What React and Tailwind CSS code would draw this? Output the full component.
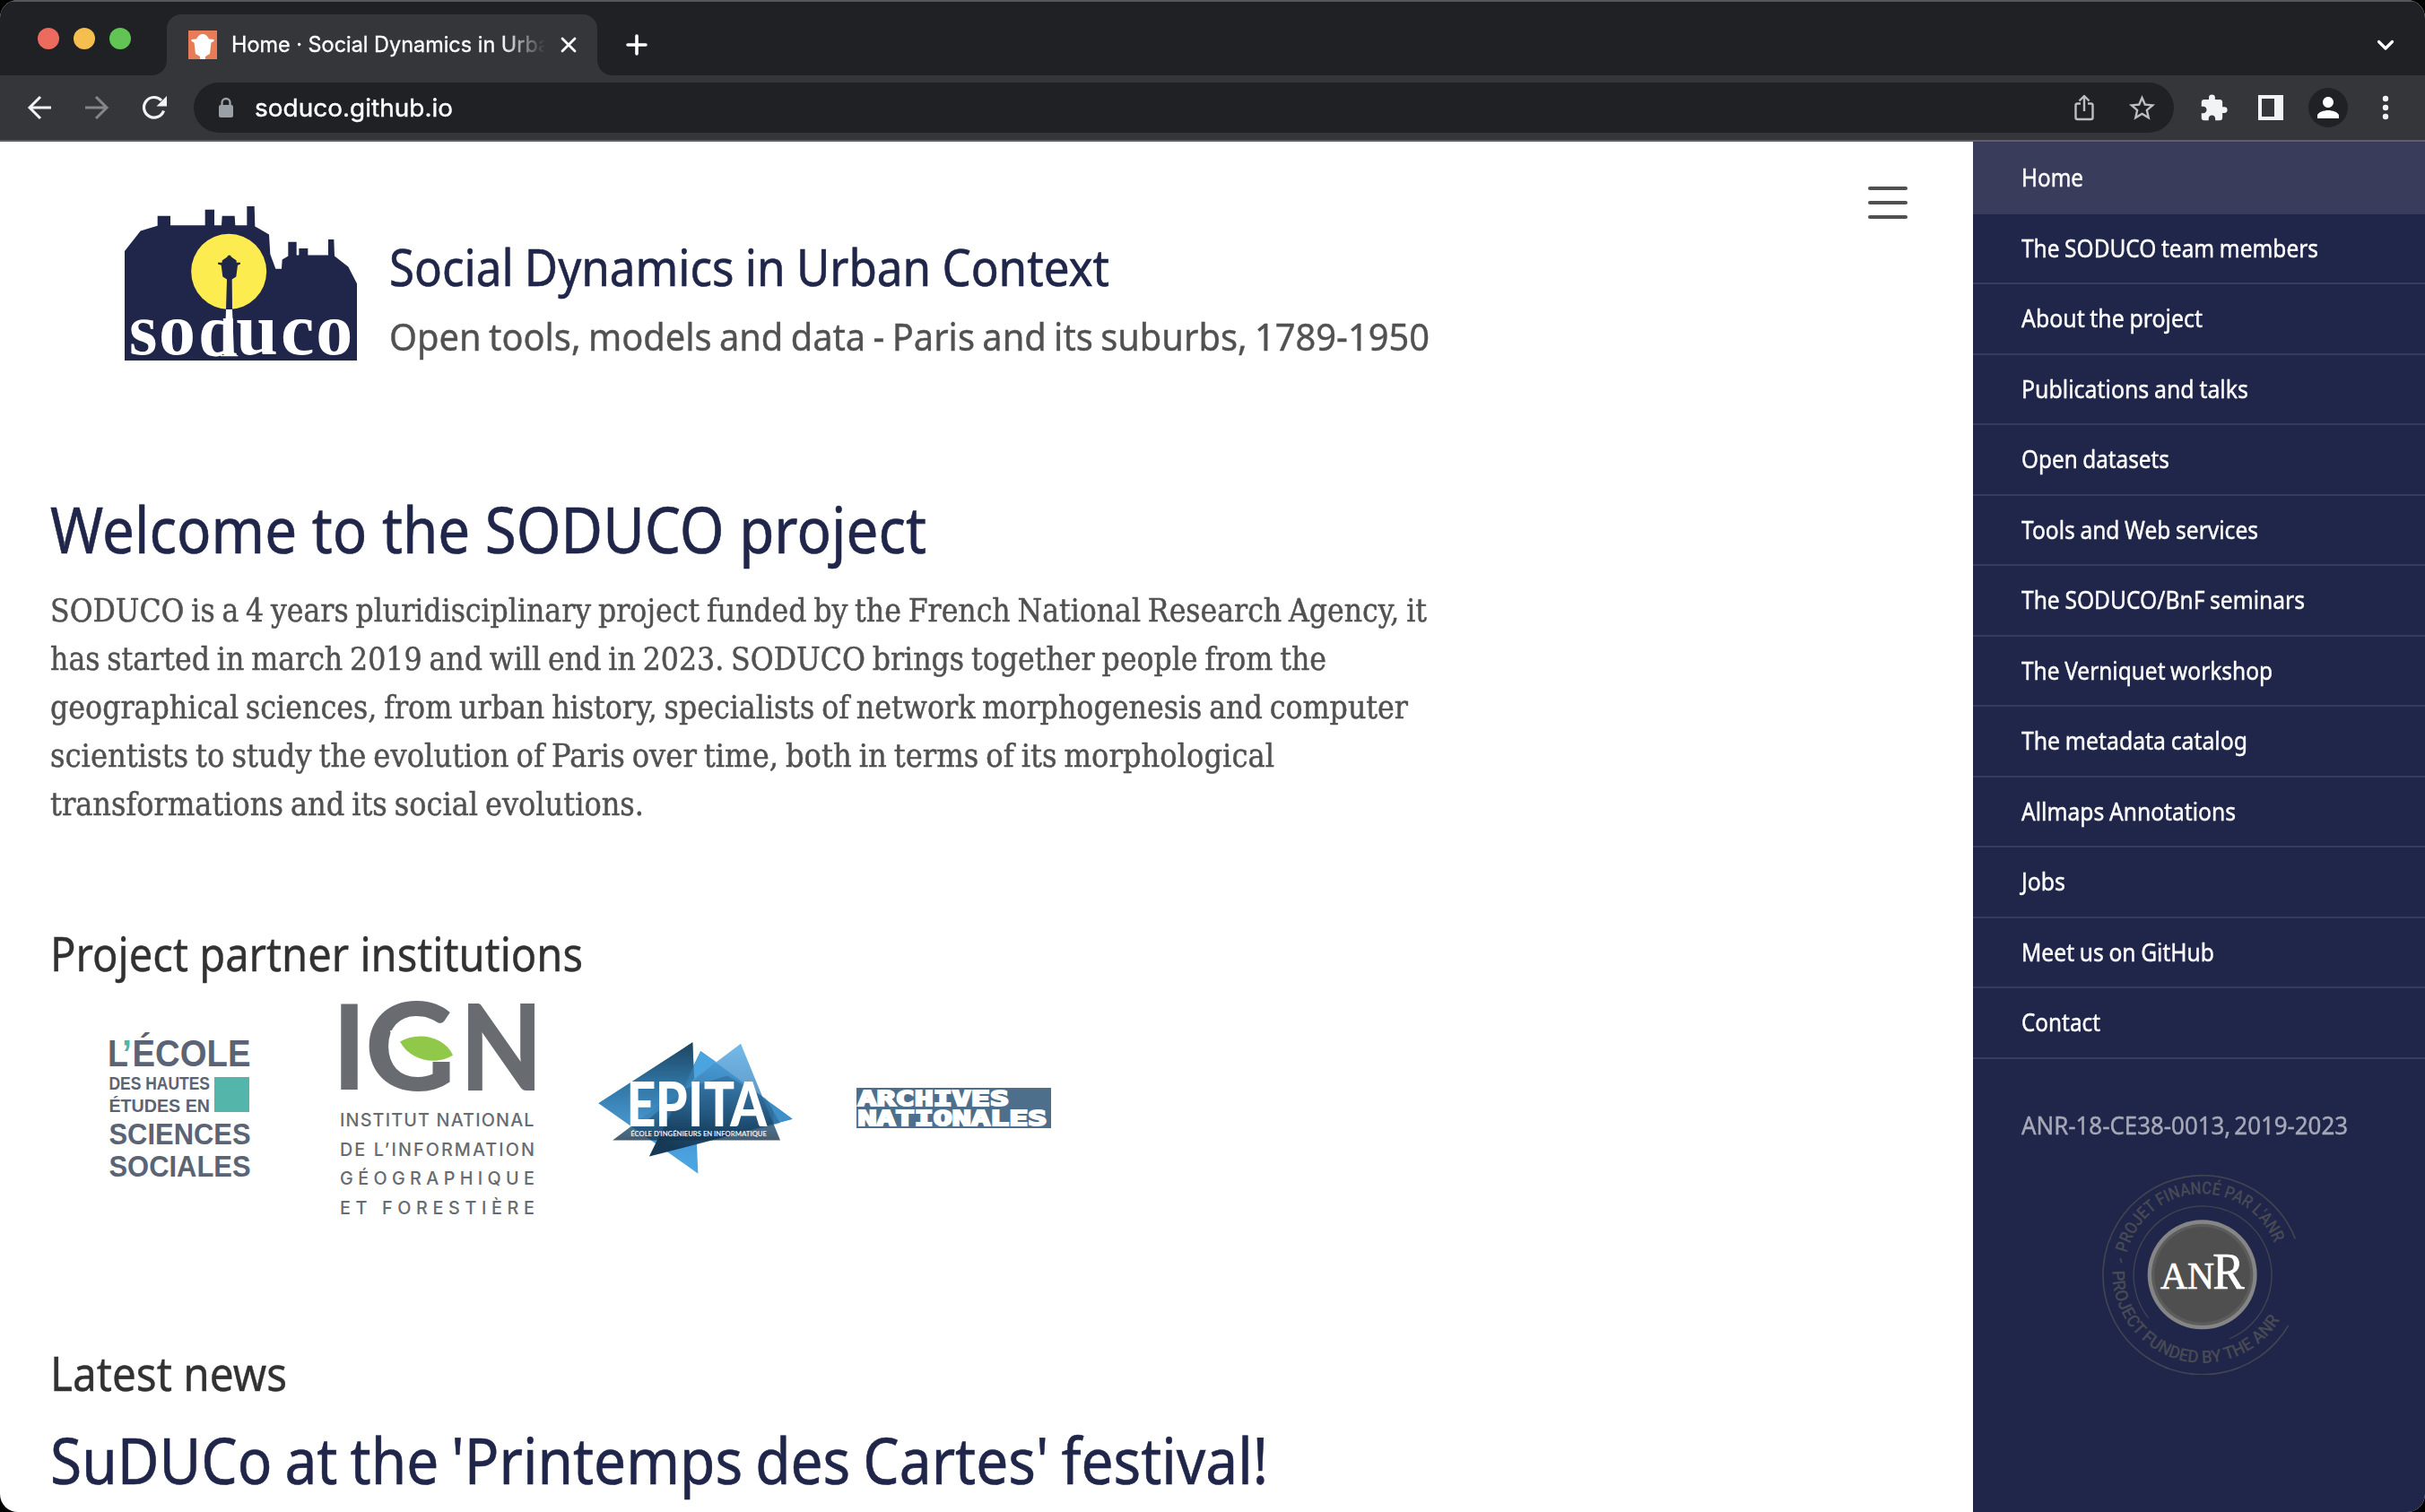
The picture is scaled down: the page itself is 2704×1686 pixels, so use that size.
import React, { useLayoutEffect, useRef } from "react";
import { MdExtension, MdPerson, MdStarBorder } from "react-icons/md";

/* A single line of text condensed or widened to an exact advance width. */
function Fit({ w, className = "", children }) {
  const ref = useRef(null);
  useLayoutEffect(() => {
    const el = ref.current;
    el.style.transform = "none";
    const natural = el.getBoundingClientRect().width;
    el.style.transform = `scaleX(${w / natural})`;
  }, [w]);
  return (
    <div className={`whitespace-nowrap ${className}`} style={{ width: w }}>
      <span ref={ref} className="inline-block origin-left">
        {children}
      </span>
    </div>
  );
}

const nav = [
  ["Home", 69],
  ["The SODUCO team members", 331],
  ["About the project", 202],
  ["Publications and talks", 253],
  ["Open datasets", 165],
  ["Tools and Web services", 264],
  ["The SODUCO/BnF seminars", 316],
  ["The Verniquet workshop", 280],
  ["The metadata catalog", 252],
  ["Allmaps Annotations", 239],
  ["Jobs", 49],
  ["Meet us on GitHub", 215],
  ["Contact", 88],
];

const intro = [
  ["SODUCO is a 4 years pluridisciplinary project funded by the French National Research Agency, it", 1535],
  ["has started in march 2019 and will end in 2023. SODUCO brings together people from the", 1423],
  ["geographical sciences, from urban history, specialists of network morphogenesis and computer", 1514],
  ["scientists to study the evolution of Paris over time, both in terms of its morphological", 1365],
  ["transformations and its social evolutions.", 662],
];

function TabStrip() {
  return (
    <div className="flex h-[84px] border-t-2 border-[#56575a] bg-[#202124] pt-[14px]">
      <div className="flex w-[186px] gap-4 pl-[42px] pt-[15px]">
        <span className="size-6 rounded-full bg-[#ed6a5f]" />
        <span className="size-6 rounded-full bg-[#f5bf4f]" />
        <span className="size-6 rounded-full bg-[#61c454]" />
      </div>
      <div className="relative flex w-[480px] items-center rounded-t-[16px] bg-[#35363a] pl-6">
        <span className="absolute -left-4 bottom-0 size-4 bg-[radial-gradient(circle_at_0_0,transparent_15.5px,#35363a_16px)]" />
        <span className="absolute -right-4 bottom-0 size-4 bg-[radial-gradient(circle_at_100%_0,transparent_15.5px,#35363a_16px)]" />
        <svg width="32" height="32" viewBox="0 0 32 32">
          <rect width="32" height="32" fill="#e87c57" />
          <path d="M9 9.500C10.500 6 13 4 16 4s5.500 2 7 5.500l5.500.5v2l-3 1.500L24 26l-5 3v3h-6v-3l-5-3-1.500-12.500-3-1.500v-2z" fill="#fff" />
        </svg>
        <div className="ml-4 w-[350px] overflow-hidden font-['Inter'] text-[24px] leading-[32px] text-white [-webkit-text-stroke:0.3px] [mask-image:linear-gradient(to_right,black_300px,transparent_350px)]">
          <Fit w={369}>Home · Social Dynamics in Urban</Fit>
        </div>
        <svg className="ml-[10px]" width="32" height="32" viewBox="0 0 32 32" stroke="#fff" strokeWidth="2.8" strokeLinecap="round">
          <path d="M9 9l14 14M23 9L9 23" />
        </svg>
      </div>
      <svg className="ml-[28px] mt-[18px]" width="32" height="32" viewBox="0 0 32 32" stroke="#fff" strokeWidth="3.6" strokeLinecap="round">
        <path d="M16 6v20M6 16h20" />
      </svg>
      <svg className="ml-auto mr-[28px] mt-[18px]" width="32" height="32" viewBox="0 0 32 32" fill="none" stroke="#fff" strokeWidth="3.2" strokeLinecap="round" strokeLinejoin="round">
        <path d="M8.500 12.500L16 20l7.500-7.500" />
      </svg>
    </div>
  );
}

function Toolbar() {
  return (
    <div className="flex h-[74px] items-center border-b-2 border-[#5f6062] bg-[#35363a]">
      <div className="flex w-[216px] items-center gap-8 pl-7">
        <svg width="32" height="32" viewBox="0 0 32 32" fill="none" stroke="#f1f3f4" strokeWidth="3">
          <path d="M29 16H5M17 4L5 16l12 12" />
        </svg>
        <svg width="32" height="32" viewBox="0 0 32 32" fill="none" stroke="#85868a" strokeWidth="3">
          <path d="M3 16h24M15 4l12 12-12 12" />
        </svg>
        <svg width="32" height="32" viewBox="0 0 32 32">
          <path d="M26.500 19.500A11.300 11.300 0 1 1 24 8" fill="none" stroke="#f1f3f4" strokeWidth="3.200" />
          <path d="M30 3v11.500H18.500z" fill="#f1f3f4" />
        </svg>
      </div>
      <div className="flex h-14 w-[2208px] items-center rounded-full bg-[#202124] pl-[26px] pr-[18px]">
        <svg width="20" height="24" viewBox="0 0 20 24">
          <path d="M5.500 10V6.500a4.500 4.500 0 019 0V10" fill="none" stroke="#9aa0a6" strokeWidth="2.400" />
          <rect x="2" y="9" width="16" height="14" rx="2" fill="#9aa0a6" />
        </svg>
        <Fit w={221} className="ml-[22px] font-['Inter'] text-[27.5px] leading-[36px] text-white [-webkit-text-stroke:0.4px]">
          soduco.github.io
        </Fit>
        <svg className="ml-auto" width="32" height="32" viewBox="0 0 32 32" fill="none" stroke="#bdbec0" strokeWidth="2.400" strokeLinejoin="round">
          <path d="M12 11.500H8.500a2 2 0 00-2 2V27a2 2 0 002 2h15a2 2 0 002-2V13.500a2 2 0 00-2-2H20M16 20V3.500M10.500 8.500L16 3l5.500 5.500" />
        </svg>
        <MdStarBorder size={35} color="#bdbec0" className="ml-[31px]" />
      </div>
      <MdExtension size={33} color="#f1f3f4" className="ml-[28px]" />
      <svg className="ml-[33px]" width="28" height="28" viewBox="0 0 28 28">
        <path d="M0 0h28v28H0zM4 4v20h14V4z" fill="#f1f3f4" fillRule="evenodd" />
      </svg>
      <div className="ml-[28px] flex size-11 items-center justify-center rounded-full bg-[#202124]">
        <MdPerson size={36} color="#fff" />
      </div>
      <svg className="ml-[34px]" width="16" height="32" viewBox="0 0 16 32" fill="#f1f3f4">
        <circle cx="8" cy="6" r="3.200" />
        <circle cx="8" cy="16" r="3.200" />
        <circle cx="8" cy="26" r="3.200" />
      </svg>
    </div>
  );
}

function SoducoLogo() {
  return (
    <svg width="259" height="172" viewBox="57 60 777 515" preserveAspectRatio="none">
      <path
        fill="#20264a"
        d="M57 210L110 142L167 125V92H210V124H326V71H357V124H381L383 92H425L427 124H466V60H491L493 127L540 154L544 220L562 269H582L584 238L604 226V179H632V223H640V201H670V223H738V171H757L759 226L805 262L834 318V575H57Z"
      />
      <g fill="#fff" fontFamily="'Liberation Serif', serif" fontWeight="700" fontSize="244">
        <text x="72" y="555" textLength="94" lengthAdjust="spacingAndGlyphs">s</text>
        <text x="171" y="555" textLength="123" lengthAdjust="spacingAndGlyphs">o</text>
        <text x="430" y="555" textLength="140" lengthAdjust="spacingAndGlyphs">u</text>
        <text x="579" y="555" textLength="112" lengthAdjust="spacingAndGlyphs">c</text>
        <text x="697" y="555" textLength="123" lengthAdjust="spacingAndGlyphs">o</text>
        <text x="304" y="557" textLength="130" lengthAdjust="spacingAndGlyphs">d</text>
      </g>
      <path d="M330 370H430V434H330Z" fill="#20264a" />
      <circle cx="405.500" cy="278" r="126" fill="#fdec4f" />
      <path
        fill="#20264a"
        d="M399 230Q407 217 415 230L431 241V248H444V253L435 257L430 295L416 304L417 404H396L399 304L385 295L380 257L369 253V248H383V241Z"
      />
      <path d="M396 404H417L423 557H436V561H378V557H391Z" fill="#fff" />
    </svg>
  );
}

function EhessLogo() {
  return (
    <svg className="mt-[40px]" width="158" height="166" viewBox="31 50 158 166" fill="#5b6474" fontFamily="'Liberation Sans', sans-serif" fontWeight="700">
      <text x="30" y="89.700" fontSize="43" textLength="23" lengthAdjust="spacingAndGlyphs">L</text>
      <text x="46" y="89.700" fontSize="43" textLength="11" lengthAdjust="spacingAndGlyphs" fill="#4fb5ab">’</text>
      <text x="57.500" y="89.700" fontSize="43" textLength="132" lengthAdjust="spacingAndGlyphs">ÉCOLE</text>
      <text x="31.500" y="116" fontSize="19.500" textLength="112.500" lengthAdjust="spacingAndGlyphs">DES HAUTES</text>
      <text x="31.500" y="141" fontSize="20" textLength="112.500" lengthAdjust="spacingAndGlyphs">ÉTUDES EN</text>
      <rect x="149" y="102" width="39" height="39" fill="#54b5ab" />
      <text x="31.500" y="176.500" fontSize="34" textLength="158" lengthAdjust="spacingAndGlyphs">SCIENCES</text>
      <text x="31.500" y="213" fontSize="34" textLength="158" lengthAdjust="spacingAndGlyphs">SOCIALES</text>
    </svg>
  );
}

function IgnLogo() {
  return (
    <svg className="ml-[99px] mt-[6px]" width="220" height="248" viewBox="288 16 220 248" fill="#686b70">
      <g fontFamily="Lato, sans-serif" fontWeight="900">
        <text x="281" y="116" fontSize="132" textLength="37" lengthAdjust="spacingAndGlyphs">I</text>
        <text x="317" y="116.500" fontSize="135" textLength="101" lengthAdjust="spacingAndGlyphs">G</text>
        <text x="423" y="116.500" fontSize="134" textLength="92" lengthAdjust="spacingAndGlyphs">N</text>
      </g>
      <path d="M345 50H414V82L412 85H381V84H352Z" fill="#fff" />
      <path d="M356 62.500C375 51 405 56 415 77.500C398 89 368 85 356 62.500Z" fill="#90c94a" />
      <g fontFamily="Inter, sans-serif" fontWeight="500" fontSize="19.800">
        <text x="289" y="156.700" textLength="216.500" lengthAdjust="spacing">INSTITUT NATIONAL</text>
        <text x="289" y="189.700" textLength="217" lengthAdjust="spacing">DE L’INFORMATION</text>
        <text x="289" y="222.300" textLength="217" lengthAdjust="spacing">GÉOGRAPHIQUE</text>
        <text x="289" y="255" textLength="217" lengthAdjust="spacing">ET FORESTIÈRE</text>
      </g>
    </svg>
  );
}

function EpitaLogo() {
  return (
    <svg className="ml-[69px] mt-[53px]" width="217" height="147" viewBox="78 68 606 440" preserveAspectRatio="none">
      <defs>
        <linearGradient id="left" gradientUnits="userSpaceOnUse" x1="0" y1="69" x2="0" y2="507">
          <stop offset="0" stopColor="#1d4461" />
          <stop offset="0.300" stopColor="#2f72a0" />
          <stop offset="0.550" stopColor="#428fc6" />
          <stop offset="1" stopColor="#4da9e8" />
        </linearGradient>
        <linearGradient id="right" gradientUnits="userSpaceOnUse" x1="0" y1="73" x2="0" y2="396">
          <stop offset="0" stopColor="#4fa9e6" />
          <stop offset="0.450" stopColor="#3f88bf" />
          <stop offset="0.750" stopColor="#275f88" />
          <stop offset="1" stopColor="#15344b" />
        </linearGradient>
        <linearGradient id="back" gradientUnits="userSpaceOnUse" x1="500" y1="130" x2="330" y2="430">
          <stop offset="0" stopColor="#4ba4e0" />
          <stop offset="0.450" stopColor="#2d6e9e" />
          <stop offset="1" stopColor="#173d59" />
        </linearGradient>
      </defs>
      <path d="M372 69L79 272L389 507Z" fill="url(#left)" />
      <path d="M397 98L683 325L237 450Z" fill="url(#back)" />
      <path d="M397 98L445 134L370 205L350 210Z" fill="#4ba4e0" />
      <path d="M620 275L683 325L625 342Z" fill="#3f8fc9" />
      <path d="M522 73L645 396L123 396Z" fill="url(#right)" opacity="0.800" />
      <path d="M372 69L377 190L340 230L230 330L79 272Z" fill="url(#left)" opacity="0.750" />
      <path d="M345 225L237 450L330 424L645 340L600 255L480 180Z" fill="#123450" opacity="0.250" />
      <g fill="#fff" fontFamily="Lato, sans-serif" fontWeight="900">
        <text x="166" y="349" fontSize="206" textLength="92" lengthAdjust="spacingAndGlyphs">E</text>
        <text x="256" y="349" fontSize="206" textLength="100" lengthAdjust="spacingAndGlyphs">P</text>
        <text x="357" y="349" fontSize="206" textLength="48" lengthAdjust="spacingAndGlyphs">I</text>
        <text x="407" y="349" fontSize="206" textLength="96" lengthAdjust="spacingAndGlyphs">T</text>
        <text x="489" y="349" fontSize="206" textLength="114" lengthAdjust="spacingAndGlyphs">A</text>
      </g>
      <text x="179" y="382" fontSize="22" fontWeight="700" fill="#e6eff5" fontFamily="Lato, sans-serif" textLength="424" lengthAdjust="spacingAndGlyphs">
        ÉCOLE D'INGÉNIEURS EN INFORMATIQUE
      </text>
    </svg>
  );
}

function ArchivesLogo() {
  return (
    <svg className="ml-[71px] mt-[104px]" width="217" height="45" viewBox="885 222 605 135" preserveAspectRatio="none">
      <rect x="885" y="222" width="605" height="135" fill="#4e6f8c" />
      <g fill="#fff" stroke="#fff" strokeWidth="6" fontFamily="'DejaVu Sans Mono', monospace" fontWeight="700" fontSize="71">
        <text x="889" y="282.500" textLength="470" lengthAdjust="spacingAndGlyphs">ARCHIVES</text>
        <text x="889" y="348.500" textLength="588" lengthAdjust="spacingAndGlyphs">NATIONALES</text>
      </g>
    </svg>
  );
}

function AnrLogo() {
  return (
    <svg className="ml-[144px] mt-[37px]" width="216" height="223" viewBox="72 273 648 669">
      <defs>
        <path id="anrBottom" d="M106 594A302 302 0 0 0 710 607" />
        <path id="anrTop" d="M155.300 535A258 258 0 0 1 655 526" />
      </defs>
      <g fill="none" stroke="#424452" strokeWidth="4">
        <path d="M718 487A333 333 0 1 0 695 777" strokeWidth="5" />
        <path d="M227 752A231 231 0 1 1 497 822" />
      </g>
      <circle cx="407" cy="607" r="183" fill="#858585" />
      <circle cx="407" cy="607" r="170" fill="#5c5c5c" />
      <circle cx="407" cy="607" r="160" fill="#4f4f4f" />
      <g fill="#fff" stroke="#fff" strokeWidth="2" fontFamily="'Liberation Serif', serif">
        <text x="267" y="654" fontSize="128" textLength="180" lengthAdjust="spacingAndGlyphs">AN</text>
        <text x="442" y="654" fontSize="170" textLength="106" lengthAdjust="spacingAndGlyphs">R</text>
      </g>
      <g fill="#484a54" fontFamily="Roboto, sans-serif" fontWeight="500" fontSize="58">
        <text textLength="655" lengthAdjust="spacingAndGlyphs">
          <textPath href="#anrTop" textLength="655" lengthAdjust="spacingAndGlyphs">PROJET FINANCÉ PAR L'ANR</textPath>
        </text>
        <text textLength="790" lengthAdjust="spacingAndGlyphs">
          <textPath href="#anrBottom" textLength="790" lengthAdjust="spacingAndGlyphs">PROJECT FUNDED BY THE ANR</textPath>
        </text>
        <path d="M133 552L137 568" stroke="#484a54" strokeWidth="5" />
      </g>
    </svg>
  );
}

function Sidebar() {
  return (
    <aside className="w-[504px] shrink-0 bg-[#20264a] font-['Noto_Sans'] text-[27px] leading-[36px] text-white [-webkit-text-stroke:0.4px]">
      <nav className="border-t-2 border-[#373b5c]">
        {nav.map(([label, w], i) => (
          <a key={label} className={`block h-[78.5px] border-b-2 border-[#373b5c] pl-[54px] pt-[20px] ${i === 0 ? "bg-[#393c5b]" : ""}`}>
            <Fit w={w} className="[word-spacing:-0.03em]">{label}</Fit>
          </a>
        ))}
      </nav>
      <Fit w={364} className="ml-[54px] mt-[56px] text-[#a6a8b7] [word-spacing:-0.1em]">
        ANR-18-CE38-0013, 2019-2023
      </Fit>
      <AnrLogo />
    </aside>
  );
}

export default function App() {
  return (
    <div className="h-[1686px] w-[2704px] bg-black">
      <div className="flex h-full flex-col overflow-hidden rounded-[20px] bg-white">
        <TabStrip />
        <Toolbar />
        <div className="flex min-h-0 flex-1">
          <main className="flex min-w-0 flex-1 justify-between overflow-hidden font-['Noto_Sans'] text-[#515151]">
            <article className="pl-[56px]">
              <header className="flex pl-[83px] pt-[72px]">
                <SoducoLogo />
                <div className="ml-[36px] pt-[31px]">
                  <Fit w={803} className="text-[56px] leading-[72px] text-[#20264a] [-webkit-text-stroke:0.6px] [word-spacing:-0.02em]">
                    Social Dynamics in Urban Context
                  </Fit>
                  <Fit w={1160} className="mt-[15px] -mb-[12px] text-[42px] leading-[54px] [-webkit-text-stroke:0.4px] [word-spacing:-0.05em]">
                    Open tools, models and data - Paris and its suburbs, 1789-1950
                  </Fit>
                </div>
              </header>
              <Fit w={977} className="mt-[144px] text-[71px] leading-[88px] text-[#20264a] [-webkit-text-stroke:0.6px]">
                Welcome to the SODUCO project
              </Fit>
              <div className="mt-[20px] mb-px font-['DejaVu_Serif'] text-[35px] leading-[54px] [-webkit-text-stroke:0.5px] [word-spacing:-0.07em]">
                {intro.map(([line, w]) => (
                  <Fit key={line} w={w}>{line}</Fit>
                ))}
              </div>
              <Fit w={594} className="mt-[105px] text-[53px] leading-[68px] text-[#313131] [-webkit-text-stroke:0.4px]">
                Project partner institutions
              </Fit>
              <div className="mt-[12px] flex h-[260px] items-start pl-[65px]">
                <EhessLogo />
                <IgnLogo />
                <EpitaLogo />
                <ArchivesLogo />
              </div>
              <Fit w={264} className="mt-[128px] text-[53px] leading-[68px] text-[#313131] [-webkit-text-stroke:0.4px]">
                Latest news
              </Fit>
              <Fit w={1358} className="mt-[19px] text-[71px] leading-[88px] text-[#20264a] [-webkit-text-stroke:0.6px] [word-spacing:-0.04em]">
                SuDUCo at the 'Printemps des Cartes' festival!
              </Fit>
            </article>
            <button className="mr-[73px] mt-[50px] flex h-9 w-11 flex-col justify-between">
              <span className="h-1 w-full rounded-full bg-[#505050]" />
              <span className="h-1 w-full rounded-full bg-[#505050]" />
              <span className="h-1 w-full rounded-full bg-[#505050]" />
            </button>
          </main>
          <Sidebar />
        </div>
      </div>
    </div>
  );
}
